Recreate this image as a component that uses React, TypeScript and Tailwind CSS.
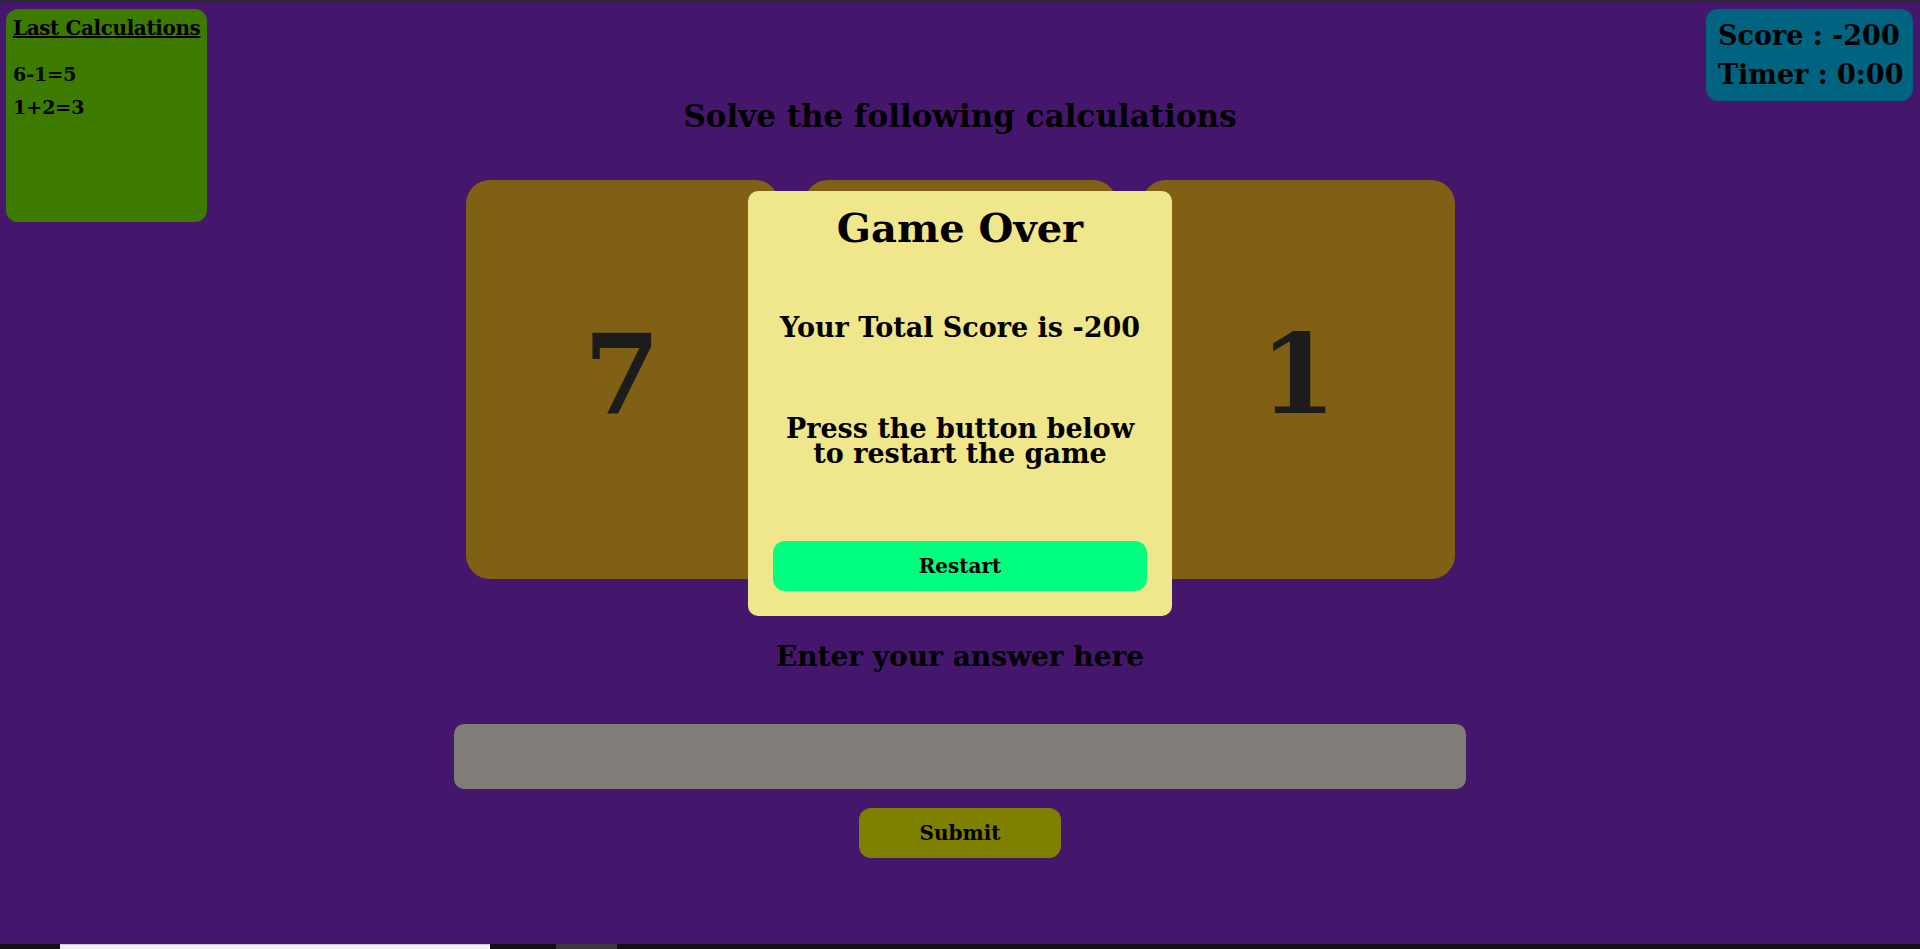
import React from 'react'

const history = ['6-1=5', '1+2=3']
const cards = ['7', '', '1']

const LastCalculations: React.FC = () => (
  <div className="w-[201px] h-[213px] rounded-[12px] bg-[#3d7b00] pl-[7px] pt-[7px]">
    <h3 className="text-[20px] leading-[24px] font-bold underline whitespace-nowrap tracking-[-0.4px]">
      Last Calculations
    </h3>
    <div className="mt-[18px]">
      {history.map((h, i) => (
        <p key={i} className="text-[19px] leading-[33px] font-bold">
          {h}
        </p>
      ))}
    </div>
  </div>
)

const ScoreBox: React.FC = () => (
  <div className="w-[207px] h-[92px] rounded-[12px] bg-[#00637f] pl-[12px] pt-[7px]">
    <p className="text-[27px] leading-[39px] font-bold whitespace-nowrap">Score : -200</p>
    <p className="text-[27px] leading-[39px] font-bold whitespace-nowrap">Timer : 0:00</p>
  </div>
)

const GameOver: React.FC = () => (
  <div className="absolute top-[189px] left-1/2 -translate-x-1/2 w-[424px] h-[425px] rounded-[10px] bg-[#f0e68c] px-[25px] flex flex-col items-center text-center">
    <h2 className="mt-[13px] text-[40px] leading-[48px] font-bold">Game Over</h2>
    <p className="mt-[60px] text-[27px] leading-[32px] font-bold whitespace-nowrap">Your Total Score is -200</p>
    <div className="mt-[72px] text-[27px] leading-[25px] font-bold">
      <p>Press the button below</p>
      <p>to restart the game</p>
    </div>
    <button className="mt-[75px] w-full h-[50px] rounded-[12px] bg-[#00ff7f] text-[20px] font-bold">
      Restart
    </button>
  </div>
)

export default function App() {
  return (
    <div className="w-[1920px] h-[949px] overflow-hidden flex flex-col bg-[#44166c] text-black font-['DejaVu_Serif',serif]">
      <div className="h-[2px] bg-[#2b2b2b]" />
      <div className="h-[942px] grid grid-cols-[220px_1fr_220px]">
        <div className="pl-[6px] pt-[7px]">
          <LastCalculations />
        </div>

        <div className="relative flex flex-col items-center">
          <h1 className="mt-[96px] text-[31px] leading-[36px] font-bold">Solve the following calculations</h1>
          <div className="mt-[46px] flex gap-[25px]">
            {cards.map((c, i) => (
              <div
                key={i}
                className="w-[313px] h-[399px] rounded-[24px] bg-[#806014] flex items-center justify-center"
              >
                <span className="mb-[9px] text-[110px] leading-none font-black text-[#1c1c1c]">{c}</span>
              </div>
            ))}
          </div>
          <h2 className="mt-[61px] text-[28px] leading-[34px] font-bold">Enter your answer here</h2>
          <input
            type="text"
            className="mt-[50px] w-[1012px] h-[65px] rounded-[10px] bg-[#807d78] outline-none px-4 text-[24px]"
          />
          <button className="mt-[19px] w-[202px] h-[50px] rounded-[12px] bg-[#808000] text-[20px] font-bold">
            Submit
          </button>
          <GameOver />
        </div>

        <div className="flex justify-end pr-[7px] pt-[7px]">
          <ScoreBox />
        </div>
      </div>
      <div className="h-[5px] flex bg-[#111111]">
        <div className="w-[60px]" />
        <div className="w-[430px] bg-[#f0f0f0] border-t border-[#cfcfcf]" />
        <div className="w-[66px]" />
        <div className="w-[61px] bg-[#3a3a3a]" />
      </div>
    </div>
  )
}
